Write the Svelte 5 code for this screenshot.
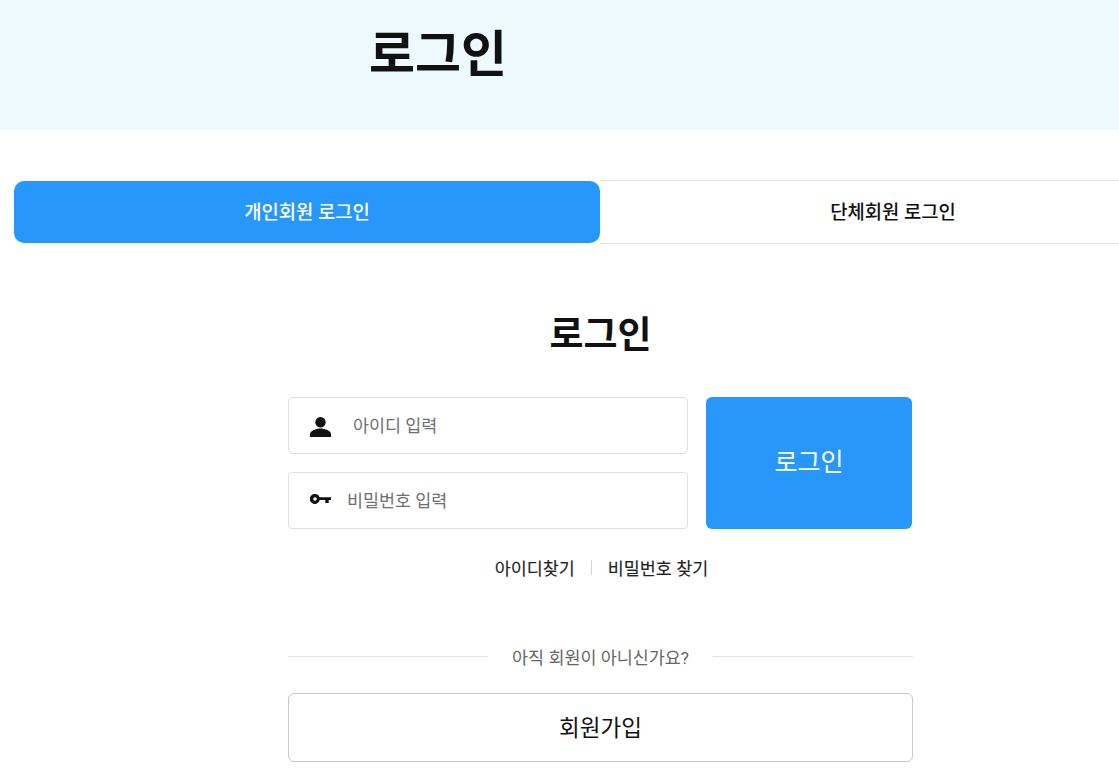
<script>
  let userId = "";
  let password = "";
</script>

<div class="page">
  <header class="page-head">
    <h1>로그인</h1>
  </header>

  <div class="tabs">
    <button class="tab active">개인회원 로그인</button>
    <button class="tab">단체회원 로그인</button>
  </div>

  <main class="login">
    <h2>로그인</h2>

    <form class="login-form" on:submit|preventDefault>
      <div class="fields">
        <label class="field">
          <svg class="icon-user" viewBox="0 0 21 20" width="21" height="20" aria-hidden="true">
            <circle cx="10.500" cy="5.200" r="5.200" />
            <path d="M0 20v-3c0-3.300 6-5.600 10.500-5.600S21 13.700 21 17v3z" />
          </svg>
          <input class="id-input" placeholder="아이디 입력" bind:value={userId} />
        </label>
        <label class="field">
          <svg class="icon-key" viewBox="0 0 21 10" width="21" height="10" aria-hidden="true">
            <path fill-rule="evenodd" d="M5 0a5 5 0 0 1 4.600 3.200H21V6h-2.300v3h-3.400V6H9.700A5 5 0 1 1 5 0zm0 3.200a1.800 1.800 0 1 0 0 3.600 1.800 1.800 0 0 0 0-3.600z" />
          </svg>
          <input class="pw-input" type="password" placeholder="비밀번호 입력" bind:value={password} />
        </label>
      </div>
      <button class="submit" type="submit">로그인</button>
    </form>

    <div class="find-links">
      <a href="#id">아이디찾기</a>
      <span class="sep"></span>
      <a href="#pw">비밀번호 찾기</a>
    </div>

    <div class="not-member">
      <span>아직 회원이 아니신가요?</span>
    </div>

    <button class="join">회원가입</button>
  </main>
</div>

<style>
  :global(body) {
    overflow: hidden;
  }

  .page {
    width: 1119px;
    height: 782px;
    overflow: hidden;
    background: #fff;
    color: #111;
    font-family: Roboto, "Noto Sans CJK KR", sans-serif;
  }

  .page-head {
    height: 130px;
    padding: 23px 0 0 369px;
    box-sizing: border-box;
    background: #edf8ff;
  }

  h1 {
    margin: 0;
    font-size: 50px;
    line-height: 64px;
    font-weight: 600;
    color: #111;
  }

  .tabs {
    display: flex;
    width: 1172px;
    height: 64px;
    margin: 50px 0 0 14px;
  }

  .tab {
    flex: 1;
    padding: 0 0 3px;
    border: 0;
    border-top: 1px solid #e2e2e2;
    border-bottom: 1px solid #e2e2e2;
    background: #fff;
    color: #111;
    font: 500 18.800px Roboto, "Noto Sans CJK KR", sans-serif;
  }

  .tab.active {
    border: 0;
    height: 62px;
    margin-top: 1px;
    border-radius: 10px;
    background: #2897fb;
    color: #fff;
  }

  .login {
    width: 625px;
    margin-left: 288px;
  }

  h2 {
    margin: 67px 0 0;
    font-size: 37px;
    line-height: 50px;
    font-weight: 600;
    text-align: center;
    color: #111;
  }

  .login-form {
    display: flex;
    justify-content: space-between;
    width: 624px;
    margin-top: 36px;
  }

  .fields {
    display: flex;
    flex-direction: column;
    gap: 18px;
    width: 400px;
  }

  .field {
    display: flex;
    align-items: center;
    height: 57px;
    box-sizing: border-box;
    border: 1px solid #e0e0e0;
    border-radius: 4px;
  }

  .icon-user,
  .icon-key {
    flex: none;
    fill: #111;
  }

  .icon-user {
    margin: 3px 0 0 21px;
  }

  .icon-key {
    margin: -3px 0 0 21px;
  }

  input {
    flex: 1;
    min-width: 0;
    padding: 0;
    border: 0;
    outline: 0;
    background: transparent;
    font: 400 17.400px Roboto, "Noto Sans CJK KR", sans-serif;
    color: #111;
  }

  input::placeholder {
    color: #6f6f6f;
    opacity: 1;
  }

  .id-input {
    margin-left: 22px;
  }

  .pw-input {
    margin-left: 16px;
  }

  .submit {
    width: 206px;
    padding: 0 0 6px;
    border: 0;
    border-radius: 6px;
    background: #2897fb;
    color: #fff;
    font: 400 25px Roboto, "Noto Sans CJK KR", sans-serif;
  }

  .find-links {
    display: flex;
    justify-content: center;
    align-items: center;
    gap: 16px;
    margin: 26px 0 0 2px;
    height: 24px;
  }

  .find-links a {
    font-size: 17.400px;
    font-weight: 400;
    color: #222;
    text-decoration: none;
    -webkit-text-stroke: 0.12px #222;
  }

  .sep {
    width: 1px;
    height: 15px;
    background: #d5d5d5;
  }

  .not-member {
    display: flex;
    align-items: center;
    gap: 24px;
    margin-top: 65px;
    height: 24px;
    font-size: 17.400px;
    color: #666;
  }

  .not-member::before,
  .not-member::after {
    content: "";
    flex: 1;
    height: 1px;
    background: #e2e2e2;
  }

  .join {
    display: block;
    width: 625px;
    height: 69px;
    margin-top: 25px;
    padding: 0 0 3px;
    border: 1px solid #c8c8c8;
    border-radius: 6px;
    background: #fff;
    color: #111;
    font: 400 22.500px Roboto, "Noto Sans CJK KR", sans-serif;
  }
</style>
